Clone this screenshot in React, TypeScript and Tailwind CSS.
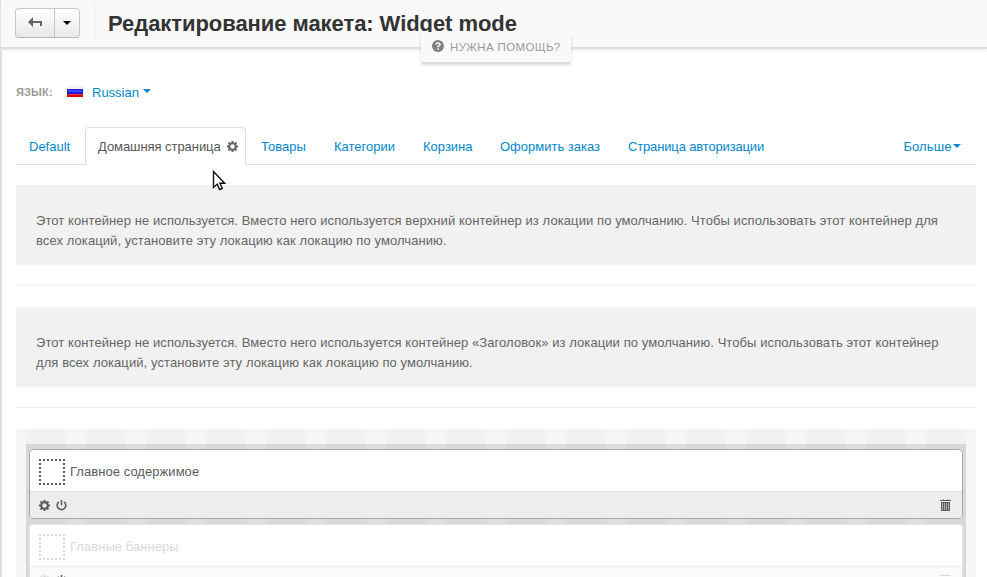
import type { ReactNode } from "react";

function Caret({ className = "" }: { className?: string }) {
  return (
    <svg className={className} width="8" height="4" viewBox="0 0 8 4" fill="currentColor">
      <path d="M0 0h8L4 4z" />
    </svg>
  );
}

function Gear({ className = "" }: { className?: string }) {
  return (
    <svg className={className} width="11" height="11" viewBox="0 0 11 11" fill="none" stroke="currentColor">
      <path strokeWidth="2" d="M5.5 0v2.4M5.5 8.6V11M0 5.5h2.4M8.6 5.5H11M1.5 1.5l1.7 1.7M7.8 7.8l1.7 1.7M9.5 1.5L7.8 3.2M3.2 7.8L1.5 9.5" />
      <circle cx="5.5" cy="5.5" r="3.3" strokeWidth="2.1" />
    </svg>
  );
}

function Power() {
  return (
    <svg width="11" height="11" viewBox="0 0 11 11" fill="none" stroke="currentColor" strokeWidth="1.6">
      <path d="M2.9 1.9a4.3 4.3 0 1 0 5.2 0M5.5 0v5.2" />
    </svg>
  );
}

function Trash() {
  return (
    <svg width="11" height="12" viewBox="0 0 11 12" shapeRendering="crispEdges">
      <path fill="currentColor" d="M0 1h11v1H0zM1 3h9v9H1z" />
      <path fill="currentColor" opacity=".6" d="M3 0h1v1H3zM7 0h1v1H7z" />
      <path fill="#aaa" d="M2 4h1v7H2zM4 4h1v7H4zM6 4h1v7H6zM8 4h1v7H8z" />
    </svg>
  );
}

function DottedBox() {
  return (
    <svg width="26" height="26" viewBox="0 0 26 26" fill="none" stroke="currentColor" strokeWidth="2" strokeDasharray="2 2" shapeRendering="crispEdges">
      <path d="M0 1h26M0 25h26M1 0v26M25 0v26" />
    </svg>
  );
}

function Notice({ children }: { children: ReactNode }) {
  return (
    <div className="h-20 bg-[#f1f1f1] px-5 pt-[26px] leading-5 tracking-[0.082px] text-[#666] whitespace-nowrap">{children}</div>
  );
}

function Block({ title, disabled = false }: { title: string; disabled?: boolean }) {
  return (
    <div className={`h-[70px] shrink-0 overflow-hidden rounded-[4px] border bg-white ${disabled ? "border-[#e6e6e6] text-[#d9d9d9]" : "border-[#aaa] text-[#5c5c5c]"}`}>
      <div className="flex h-[41px] items-start gap-[5px] pl-[9px] pt-[9px]">
        <DottedBox />
        <span className="mt-[3px] leading-5 tracking-[0.05px]">{title}</span>
      </div>
      <div className={`flex h-[27px] items-start border-t pl-[8.5px] pr-[11px] pt-[7px] ${disabled ? "border-[#efefef] bg-[#fafafa]" : "border-[#ddd] bg-[#ededed]"}`}>
        <Gear className="mr-[6px] mt-px" />
        <span className="mt-px text-[#5c5c5c]"><Power /></span>
        <span className="ml-auto"><Trash /></span>
      </div>
    </div>
  );
}

const tabs = [
  { label: "Товары", look: "ml-[15px] w-[45px]" },
  { label: "Категории", look: "ml-[28px] w-[61px]" },
  { label: "Корзина", look: "ml-[28px] w-[49px]" },
  { label: "Оформить заказ", look: "ml-[28px] w-[100px]" },
  { label: "Страница авторизации", look: "ml-[28px] tracking-[-0.15px]" },
];

export default function App() {
  return (
    <div className="relative h-[577px] w-[987px] overflow-hidden bg-white font-['Liberation_Sans',Arial,sans-serif] text-[13px]">
      <div className="flex h-full">
        <aside className="w-[2px] shrink-0 bg-[#dfdfdf]" />
        <div className="flex min-w-0 grow flex-col">
          <header className="-ml-px flex h-[47px] shrink-0 items-start bg-[#f9f9f9] pl-[14px] pt-2 shadow-[0_2px_0_#dedede,0_3px_3px_#e6e6e6]">
            <div className="flex h-[30px] w-[65px] rounded-[4px] border border-[#c8c8c8] border-b-[#b5b5b5] bg-gradient-to-b from-white to-[#e8e8e8]">
              <button className="flex w-[39px] items-start justify-center border-r border-[#c5c5c5] pt-[8px] text-[#666]">
                <svg width="14" height="10" viewBox="0 0 14 10" fill="currentColor">
                  <path d="M0 5l5-5v4h9v5h-2V6H5v4z" />
                </svg>
              </button>
              <button className="flex grow items-center justify-center text-black"><Caret /></button>
            </div>
            <div className="-mt-1 ml-[14px] h-[36px] w-px bg-[#eeeeee]" />
            <h1 className="ml-[13px] text-[22px] font-bold leading-8 tracking-[-0.06px] text-[#333] whitespace-nowrap">Редактирование макета: Widget mode</h1>
          </header>

          <main className="flex min-h-0 grow flex-col pl-[14px] pr-[11px] pt-[35px]">
            <div className="flex h-5 shrink-0 items-start">
              <span className="w-[51px] leading-5 text-[11px] font-bold tracking-[0.15px] text-[#999]">ЯЗЫК:</span>
              <svg className="mt-[4px]" width="16" height="11" viewBox="0 0 16 11">
                <path fill="#f3f3f3" d="M0 0h16v3H0z" />
                <path fill="#1c1cd8" d="M0 3h16v5H0z" />
                <path fill="#4040ff" d="M1 4h14v2H1z" />
                <path fill="#e00000" d="M0 8h16v3H0z" />
                <path fill="#ff3030" d="M1 8h14v1H1z" />
              </svg>
              <span className="ml-[9px] mt-px leading-5 text-[#0388cc]">Russian</span>
              <Caret className="ml-1 mt-[7px] text-[#0388cc]" />
            </div>

            <nav className="mt-[25px] flex h-[38px] shrink-0 items-start border-b border-[#ddd] leading-[18px] text-[#0388cc] whitespace-nowrap">
              <a className="ml-[13px] w-[56px] pt-[11px]">Default</a>
              <a className="flex h-[38px] w-[161px] rounded-t-[4px] border border-b-0 border-[#ddd] bg-white pl-[11px] pt-[10px] text-[#555]">
                <span className="w-[129.5px] pl-px tracking-[-0.06px]">Домашняя страница</span>
                <Gear className="mt-[3px] text-[#666]" />
              </a>
              {tabs.map((t) => (
                <a key={t.label} className={`${t.look} pt-[11px]`}>{t.label}</a>
              ))}
              <a className="ml-auto mr-[15px] flex pt-[11px]">
                <span className="tracking-[0.1px]">Больше</span>
                <Caret className="ml-[1.5px] mt-[6px]" />
              </a>
            </nav>

            <section className="mt-5 shrink-0">
              <Notice>
                Этот контейнер не используется. Вместо него используется верхний контейнер из локации по умолчанию. Чтобы использовать этот контейнер для<br />
                всех локаций, установите эту локацию как локацию по умолчанию.
              </Notice>
            </section>
            <hr className="mt-5 shrink-0 border-[#eee]" />
            <section className="mt-[21px] shrink-0">
              <Notice>
                Этот контейнер не используется. Вместо него используется контейнер «Заголовок» из локации по умолчанию. Чтобы использовать этот контейнер<br />
                для всех локаций, установите эту локацию как локацию по умолчанию.
              </Notice>
            </section>
            <hr className="mt-5 shrink-0 border-[#eee]" />

            <section className="mt-[21px] min-h-0 grow overflow-hidden bg-[repeating-linear-gradient(to_right,#f6f6f6_0,#f6f6f6_10px,#f1f1f1_10px,#f1f1f1_50px,#f6f6f6_50px,#f6f6f6_60px)] px-[10px] pt-[15px]">
              <div className="flex h-[200px] flex-col gap-[5px] bg-black/10 px-[3px] pt-[5px]">
                <Block title="Главное содержимое" />
                <Block title="Главные баннеры" disabled />
              </div>
            </section>
          </main>
        </div>
      </div>

      <div className="absolute left-[421px] top-[32px] flex h-[30px] w-[150px] items-start bg-[#f9f9f9] pl-[11px] text-[#999] shadow-[0_3px_3px_rgba(0,0,0,0.15)] whitespace-nowrap">
        <svg className="mr-[6px] mt-[8px]" width="12" height="12" viewBox="0 0 12 12">
          <circle cx="6" cy="6" r="6" fill="#808080" />
          <path d="M4 4.6C4 2.4 8 2.4 8 4.5 8 5.8 6 5.6 6 7.2M6 8.2v1.5" fill="none" stroke="#fff" strokeWidth="1.6" />
        </svg>
        <span className="mt-[6px] text-[11.5px] leading-[18px] tracking-[0.36px]">НУЖНА ПОМОЩЬ?</span>
      </div>

      <svg className="absolute left-[212px] top-[170px]" width="15" height="22" viewBox="0 0 15 22">
        <path d="M1.5 1.5v16l3.7-3.4 2.4 5.4 2.7-1.2-2.4-5.1h4.8z" fill="#fff" stroke="#111" strokeWidth="1.4" />
      </svg>
    </div>
  );
}
